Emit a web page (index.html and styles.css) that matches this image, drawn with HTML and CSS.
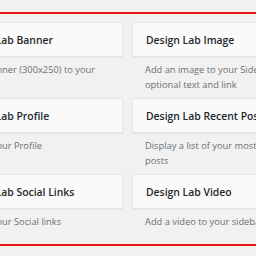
FILE: index.html
```html
<!DOCTYPE html>
<html lang="en">
  <head>
    <meta charset="UTF-8" />
    <meta name="viewport" content="width=device-width, initial-scale=1.0" />
    <title>Widgets</title>
    <link rel="stylesheet" href="styles.css">
  </head>

  <body>
    <!-- highlighted widget list -->
    <div class="frame">
      <div class="widgets">
        <div class="widget">
          <div class="widget-title">Design Lab Banner</div>
          <div class="widget-desc">Add a Banner (300x250) to your sidebar</div>
        </div>
        <div class="widget">
          <div class="widget-title">Design Lab Image</div>
          <div class="widget-desc">Add an image to your Sidebar with optional text and link</div>
        </div>
        <div class="widget">
          <div class="widget-title">Design Lab Profile</div>
          <div class="widget-desc">Display your Profile</div>
        </div>
        <div class="widget">
          <div class="widget-title">Design Lab Recent Posts</div>
          <div class="widget-desc">Display a list of your most recent posts</div>
        </div>
        <div class="widget">
          <div class="widget-title">Design Lab Social Links</div>
          <div class="widget-desc">Display your Social links</div>
        </div>
        <div class="widget">
          <div class="widget-title">Design Lab Video</div>
          <div class="widget-desc">Add a video to your sidebar</div>
        </div>
      </div>
    </div>
  </body>
</html>
```

FILE: styles.css
```css
body {
  margin: 0;
  background: #f1f1f1;
  font-family: "Open Sans", sans-serif;
  overflow: hidden;
}

.frame {
  margin-top: 12px;
  height: 234px;
  box-sizing: border-box;
  padding-top: 8px;
  border-top: 2px solid #ee1111;
  border-bottom: 2px solid #ee1111;
  overflow: hidden;
}

.widgets {
  display: grid;
  grid-template-columns: 178px 178px;
  column-gap: 9px;
  row-gap: 6px;
  margin-left: -55px;
}

.widget-title {
  height: 35px;
  box-sizing: border-box;
  display: flex;
  align-items: center;
  padding: 0 13px;
  background: #fafafa;
  border: 1px solid #e6e6e6;
  box-shadow: 0 1px 1px rgba(0, 0, 0, 0.04);
  color: #23282d;
  font-size: 10.4px;
  font-weight: 600;
  white-space: nowrap;
}

.widget-desc {
  min-height: 30px;
  margin-top: 5px;
  padding: 0 4px 0 13px;
  color: #6c7075;
  font-size: 9.3px;
  line-height: 15px;
}
```
